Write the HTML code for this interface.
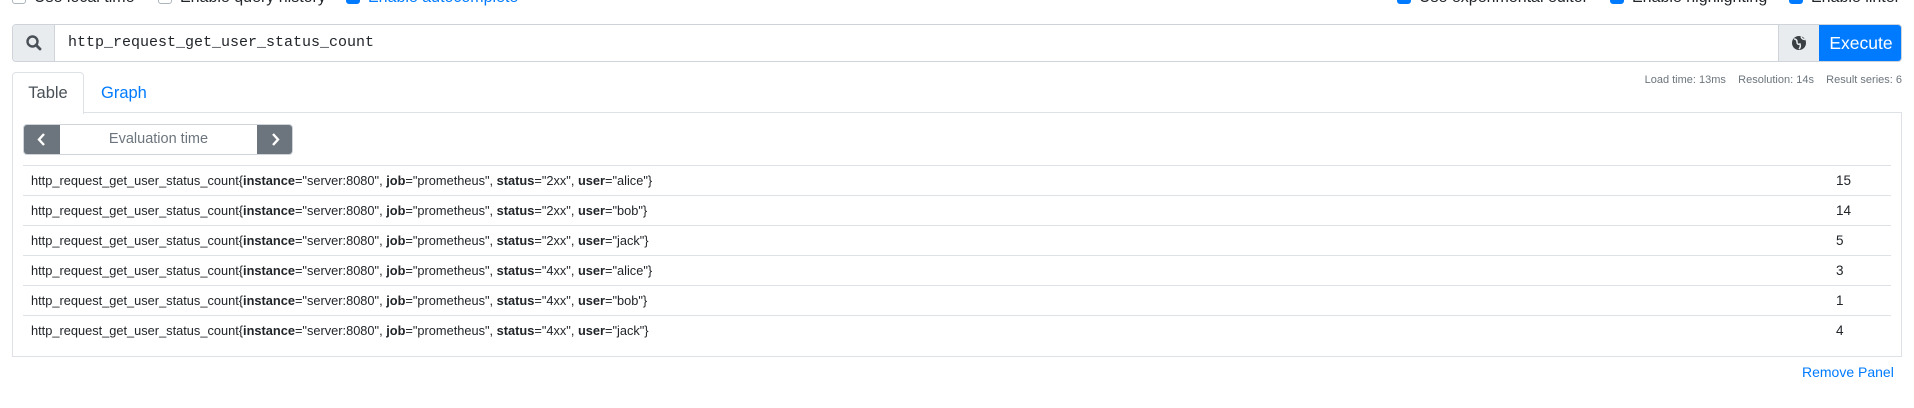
<!DOCTYPE html>
<html><head><meta charset="utf-8"><style>
*{box-sizing:border-box}
body{margin:0;width:1914px;height:408px;overflow:hidden;background:#fff;font-family:"Liberation Sans",Arial,sans-serif;color:#212529;position:relative}
.abs{position:absolute}
.cb{position:absolute;top:-9px;width:14px;height:13px;border:1px solid #adb5bd;border-radius:3px;background:#fff}
.cb.on{background:#007bff;border-color:#007bff}
.cbl{position:absolute;top:-9px;font-size:16px;line-height:14px;color:#212529}
.cbl.on{color:#007bff}
.row{position:absolute;left:23px;width:1868px;height:30px;border-top:1px solid #dee2e6;font-size:12.8px;line-height:30px}
.row .t{position:absolute;left:8px}
.row .v{position:absolute;left:1813px;font-size:13.5px}
b{font-weight:bold}
</style></head><body>
<div class="cb" style="left:12px"></div><div class="cbl" style="left:34px">Use local time</div>
<div class="cb" style="left:158px"></div><div class="cbl" style="left:180px">Enable query history</div>
<div class="cb on" style="left:346px"></div><div class="cbl on" style="left:368px">Enable autocomplete</div>
<div class="cb on" style="left:1397px"></div><div class="cbl" style="left:1419px">Use experimental editor</div>
<div class="cb on" style="left:1610px"></div><div class="cbl" style="left:1632px">Enable highlighting</div>
<div class="cb on" style="left:1789px"></div><div class="cbl" style="left:1811px">Enable linter</div>

<div class="abs" style="left:12px;top:24px;width:1890px;height:38px;border:1px solid #ced4da;border-radius:4px;overflow:hidden">
  <div class="abs" style="left:0;top:0;width:42px;height:36px;background:#e9ecef;border-right:1px solid #ced4da">
    <svg width="42" height="36" viewBox="0 0 42 36"><circle cx="19.5" cy="16.5" r="5" fill="none" stroke="#495057" stroke-width="2.4"/><line x1="23" y1="20" x2="27" y2="24" stroke="#495057" stroke-width="2.8" stroke-linecap="round"/></svg>
  </div>
  <div class="abs" style="left:55px;top:0;line-height:36px;font-family:'Liberation Mono',monospace;font-size:15px;color:#212529">http_request_get_user_status_count</div>
  <div class="abs" style="left:1765px;top:0;width:41px;height:36px;background:#e9ecef;border-left:1px solid #ced4da">
    <svg width="40" height="36" viewBox="0 0 40 36"><circle cx="20" cy="18" r="7" fill="#3a3f44"/><path d="M15 14q3 0 3 3t3 2q1 3-1 5M22 11.5q1 3 4 3" fill="none" stroke="#e9ecef" stroke-width="1.5"/></svg>
  </div>
  <div class="abs" style="left:1806px;top:-1px;width:84px;height:38px;background:#007bff;color:#fff;font-size:17.5px;line-height:38px;text-align:center">Execute</div>
</div>

<div class="abs" style="right:12px;top:74px;font-size:11px;color:#6c757d">Load time: 13ms &nbsp;&nbsp; Resolution: 14s &nbsp;&nbsp; Result series: 6</div>

<div class="abs" style="left:12px;top:112px;width:1890px;height:245px;border:1px solid #dee2e6"></div>
<div class="abs" style="left:12px;top:72px;width:72px;height:42px;background:#fff;border:1px solid #dee2e6;border-bottom:none;border-radius:4px 4px 0 0;font-size:16.5px;line-height:40px;text-align:center;color:#495057">Table</div>
<div class="abs" style="left:101px;top:72px;line-height:42px;font-size:16.5px;color:#007bff">Graph</div>

<div class="abs" style="left:23px;top:124px;width:270px;height:31px;border:1px solid #ced4da;border-radius:4px;overflow:hidden">
  <div class="abs" style="left:0;top:-1px;width:36px;height:31px;background:#6c757d"><svg width="36" height="31"><path d="M20 10l-5 5.5 5 5.5" fill="none" stroke="#fff" stroke-width="2.4"/></svg></div>
  <div class="abs" style="left:36px;top:0;width:197px;line-height:29px;text-align:center;font-size:14.5px;color:#6c757d">Evaluation time</div>
  <div class="abs" style="left:233px;top:-1px;width:36px;height:31px;background:#6c757d"><svg width="36" height="31"><path d="M16 10l5 5.5-5 5.5" fill="none" stroke="#fff" stroke-width="2.4"/></svg></div>
</div>

<div class="row" style="top:165px"><span class="t">http_request_get_user_status_count{<b>instance</b>="server:8080", <b>job</b>="prometheus", <b>status</b>="2xx", <b>user</b>="alice"}</span><span class="v">15</span></div>
<div class="row" style="top:195px"><span class="t">http_request_get_user_status_count{<b>instance</b>="server:8080", <b>job</b>="prometheus", <b>status</b>="2xx", <b>user</b>="bob"}</span><span class="v">14</span></div>
<div class="row" style="top:225px"><span class="t">http_request_get_user_status_count{<b>instance</b>="server:8080", <b>job</b>="prometheus", <b>status</b>="2xx", <b>user</b>="jack"}</span><span class="v">5</span></div>
<div class="row" style="top:255px"><span class="t">http_request_get_user_status_count{<b>instance</b>="server:8080", <b>job</b>="prometheus", <b>status</b>="4xx", <b>user</b>="alice"}</span><span class="v">3</span></div>
<div class="row" style="top:285px"><span class="t">http_request_get_user_status_count{<b>instance</b>="server:8080", <b>job</b>="prometheus", <b>status</b>="4xx", <b>user</b>="bob"}</span><span class="v">1</span></div>
<div class="row" style="top:315px"><span class="t">http_request_get_user_status_count{<b>instance</b>="server:8080", <b>job</b>="prometheus", <b>status</b>="4xx", <b>user</b>="jack"}</span><span class="v">4</span></div>

<div class="abs" style="left:1802px;top:364px;font-size:14px;color:#007bff">Remove Panel</div>
</body></html>
